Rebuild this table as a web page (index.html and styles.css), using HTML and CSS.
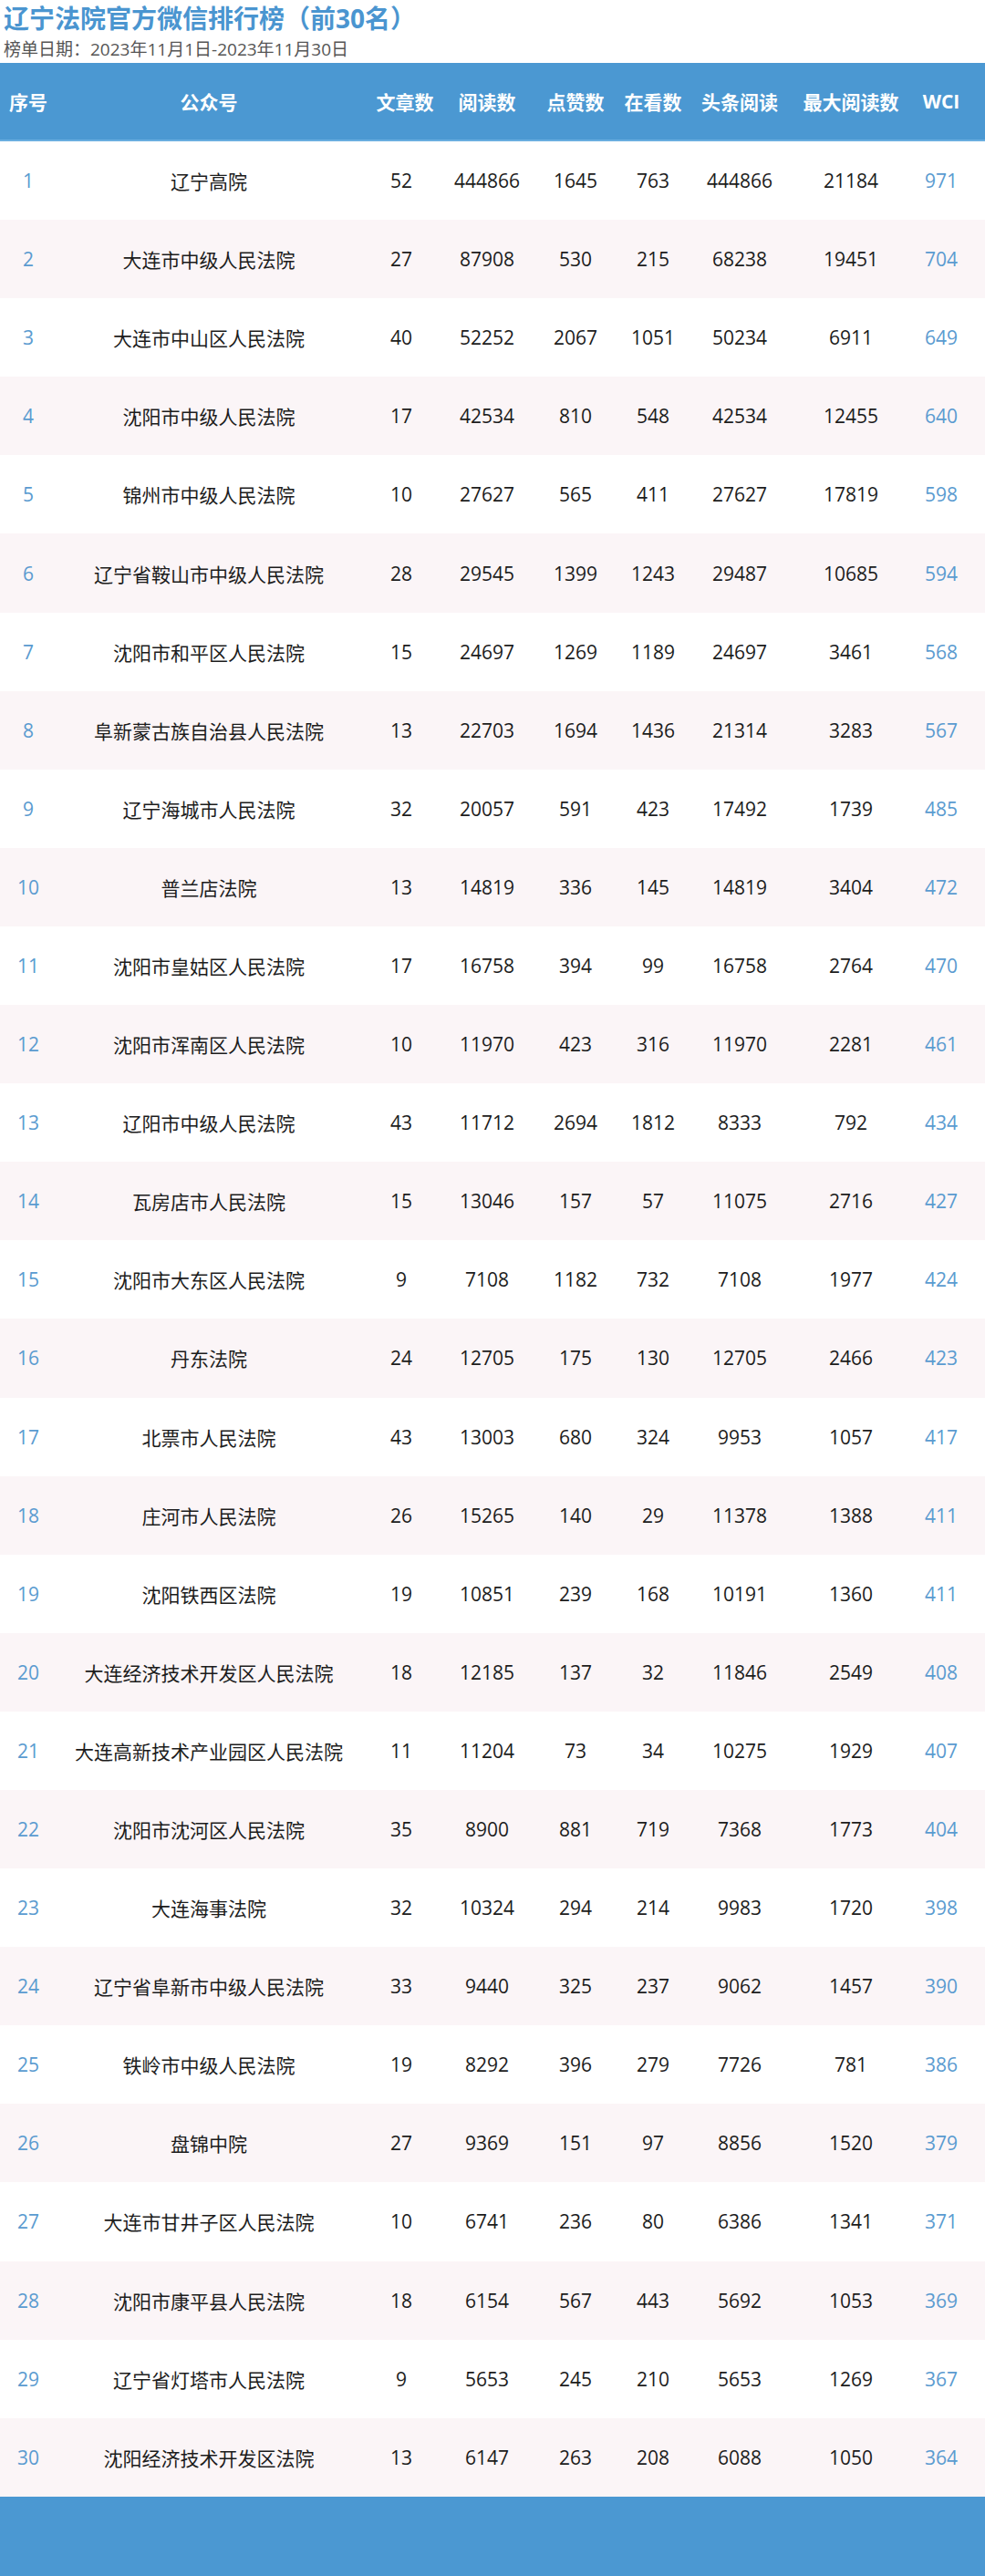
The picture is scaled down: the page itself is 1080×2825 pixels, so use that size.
FILE: index.html
```html
<!DOCTYPE html>
<html lang="zh-CN">
<head>
<meta charset="utf-8">
<title>辽宁法院官方微信排行榜</title>
<link rel="stylesheet" href="styles.css">
</head>
<body>
<div class="page">
  <header class="intro">
    <h1 class="title">辽宁法院官方微信排行榜（前30名）</h1>
    <p class="date">榜单日期：2023年11月1日-2023年11月30日</p>
  </header>
  <div class="board">
    <div class="row head"><span>序号</span><span>公众号</span><span>文章数</span><span>阅读数</span><span>点赞数</span><span>在看数</span><span>头条阅读</span><span>最大阅读数</span><span>WCI</span></div>
    <div class="row"><span class="rk">1</span><span>辽宁高院</span><span>52</span><span>444866</span><span>1645</span><span>763</span><span>444866</span><span>21184</span><span class="wci">971</span></div>
    <div class="row"><span class="rk">2</span><span>大连市中级人民法院</span><span>27</span><span>87908</span><span>530</span><span>215</span><span>68238</span><span>19451</span><span class="wci">704</span></div>
    <div class="row"><span class="rk">3</span><span>大连市中山区人民法院</span><span>40</span><span>52252</span><span>2067</span><span>1051</span><span>50234</span><span>6911</span><span class="wci">649</span></div>
    <div class="row"><span class="rk">4</span><span>沈阳市中级人民法院</span><span>17</span><span>42534</span><span>810</span><span>548</span><span>42534</span><span>12455</span><span class="wci">640</span></div>
    <div class="row"><span class="rk">5</span><span>锦州市中级人民法院</span><span>10</span><span>27627</span><span>565</span><span>411</span><span>27627</span><span>17819</span><span class="wci">598</span></div>
    <div class="row"><span class="rk">6</span><span>辽宁省鞍山市中级人民法院</span><span>28</span><span>29545</span><span>1399</span><span>1243</span><span>29487</span><span>10685</span><span class="wci">594</span></div>
    <div class="row"><span class="rk">7</span><span>沈阳市和平区人民法院</span><span>15</span><span>24697</span><span>1269</span><span>1189</span><span>24697</span><span>3461</span><span class="wci">568</span></div>
    <div class="row"><span class="rk">8</span><span>阜新蒙古族自治县人民法院</span><span>13</span><span>22703</span><span>1694</span><span>1436</span><span>21314</span><span>3283</span><span class="wci">567</span></div>
    <div class="row"><span class="rk">9</span><span>辽宁海城市人民法院</span><span>32</span><span>20057</span><span>591</span><span>423</span><span>17492</span><span>1739</span><span class="wci">485</span></div>
    <div class="row"><span class="rk">10</span><span>普兰店法院</span><span>13</span><span>14819</span><span>336</span><span>145</span><span>14819</span><span>3404</span><span class="wci">472</span></div>
    <div class="row"><span class="rk">11</span><span>沈阳市皇姑区人民法院</span><span>17</span><span>16758</span><span>394</span><span>99</span><span>16758</span><span>2764</span><span class="wci">470</span></div>
    <div class="row"><span class="rk">12</span><span>沈阳市浑南区人民法院</span><span>10</span><span>11970</span><span>423</span><span>316</span><span>11970</span><span>2281</span><span class="wci">461</span></div>
    <div class="row"><span class="rk">13</span><span>辽阳市中级人民法院</span><span>43</span><span>11712</span><span>2694</span><span>1812</span><span>8333</span><span>792</span><span class="wci">434</span></div>
    <div class="row"><span class="rk">14</span><span>瓦房店市人民法院</span><span>15</span><span>13046</span><span>157</span><span>57</span><span>11075</span><span>2716</span><span class="wci">427</span></div>
    <div class="row"><span class="rk">15</span><span>沈阳市大东区人民法院</span><span>9</span><span>7108</span><span>1182</span><span>732</span><span>7108</span><span>1977</span><span class="wci">424</span></div>
    <div class="row"><span class="rk">16</span><span>丹东法院</span><span>24</span><span>12705</span><span>175</span><span>130</span><span>12705</span><span>2466</span><span class="wci">423</span></div>
    <div class="row"><span class="rk">17</span><span>北票市人民法院</span><span>43</span><span>13003</span><span>680</span><span>324</span><span>9953</span><span>1057</span><span class="wci">417</span></div>
    <div class="row"><span class="rk">18</span><span>庄河市人民法院</span><span>26</span><span>15265</span><span>140</span><span>29</span><span>11378</span><span>1388</span><span class="wci">411</span></div>
    <div class="row"><span class="rk">19</span><span>沈阳铁西区法院</span><span>19</span><span>10851</span><span>239</span><span>168</span><span>10191</span><span>1360</span><span class="wci">411</span></div>
    <div class="row"><span class="rk">20</span><span>大连经济技术开发区人民法院</span><span>18</span><span>12185</span><span>137</span><span>32</span><span>11846</span><span>2549</span><span class="wci">408</span></div>
    <div class="row"><span class="rk">21</span><span>大连高新技术产业园区人民法院</span><span>11</span><span>11204</span><span>73</span><span>34</span><span>10275</span><span>1929</span><span class="wci">407</span></div>
    <div class="row"><span class="rk">22</span><span>沈阳市沈河区人民法院</span><span>35</span><span>8900</span><span>881</span><span>719</span><span>7368</span><span>1773</span><span class="wci">404</span></div>
    <div class="row"><span class="rk">23</span><span>大连海事法院</span><span>32</span><span>10324</span><span>294</span><span>214</span><span>9983</span><span>1720</span><span class="wci">398</span></div>
    <div class="row"><span class="rk">24</span><span>辽宁省阜新市中级人民法院</span><span>33</span><span>9440</span><span>325</span><span>237</span><span>9062</span><span>1457</span><span class="wci">390</span></div>
    <div class="row"><span class="rk">25</span><span>铁岭市中级人民法院</span><span>19</span><span>8292</span><span>396</span><span>279</span><span>7726</span><span>781</span><span class="wci">386</span></div>
    <div class="row"><span class="rk">26</span><span>盘锦中院</span><span>27</span><span>9369</span><span>151</span><span>97</span><span>8856</span><span>1520</span><span class="wci">379</span></div>
    <div class="row"><span class="rk">27</span><span>大连市甘井子区人民法院</span><span>10</span><span>6741</span><span>236</span><span>80</span><span>6386</span><span>1341</span><span class="wci">371</span></div>
    <div class="row"><span class="rk">28</span><span>沈阳市康平县人民法院</span><span>18</span><span>6154</span><span>567</span><span>443</span><span>5692</span><span>1053</span><span class="wci">369</span></div>
    <div class="row"><span class="rk">29</span><span>辽宁省灯塔市人民法院</span><span>9</span><span>5653</span><span>245</span><span>210</span><span>5653</span><span>1269</span><span class="wci">367</span></div>
    <div class="row"><span class="rk">30</span><span>沈阳经济技术开发区法院</span><span>13</span><span>6147</span><span>263</span><span>208</span><span>6088</span><span>1050</span><span class="wci">364</span></div>
  </div>
  <footer class="foot"></footer>
</div>
</body>
</html>
```
FILE: styles.css
```css
html, body {
  margin: 0;
  padding: 0;
  background: #ffffff;
}
body {
  font-family: "Open Sans", "Noto Sans CJK SC", sans-serif;
  color: #1c1c1c;
}
.page {
  width: 1080px;
  display: flex;
  flex-direction: column;
}
.intro {
  padding: 0 0 0 4px;
  height: 69px;
}
.title {
  margin: 0;
  font-size: 28px;
  line-height: 41px;
  font-weight: 700;
  color: #4a95d0;
  letter-spacing: 0;
}
.date {
  margin: 0;
  font-size: 19px;
  line-height: 27px;
  color: #555555;
}
.board {
  display: flex;
  flex-direction: column;
}
.row {
  display: grid;
  grid-template-columns: 62px 334px 88px 100px 94px 76px 114px 130px 68px 1fr;
  align-items: center;
  height: 86.1px;
  font-size: 21px;
}
.row > span {
  text-align: center;
  white-space: nowrap;
}
.row:nth-child(odd) {
  background: #fbf5f7;
}
.row.head {
  height: 86px;
  box-sizing: border-box;
  background: #4b98d2;
  border-bottom: 2px solid #6aaee0;
  color: #ffffff;
  font-weight: 700;
  font-size: 21px;
}
.row.head > span:nth-child(3) {
  padding-left: 8px;
}
.rk, .wci {
  color: #5a9bd0;
}
.foot {
  height: 87px;
  background: #4b98d2;
}
```
